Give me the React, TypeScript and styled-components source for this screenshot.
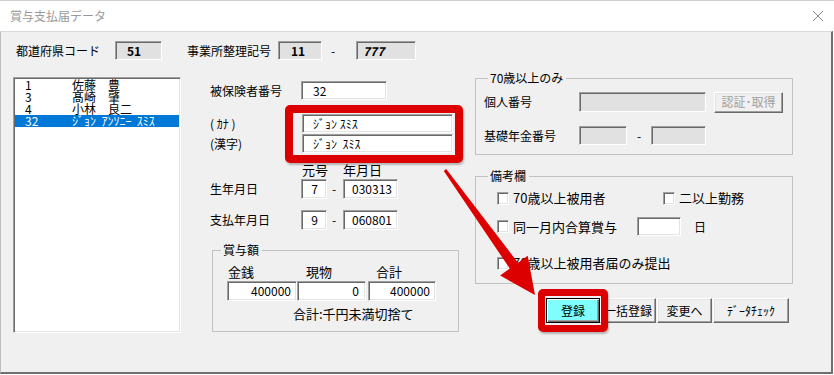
import React from 'react';
import styled, { createGlobalStyle } from 'styled-components';

const GlobalStyle = createGlobalStyle`
  html, body {
    margin: 0;
    padding: 0;
    background: #fff;
  }
  body {
    font-family: "Noto Sans CJK JP", "Noto Sans", sans-serif;
    font-size: 12px;
    color: #000;
  }
`;

const RED = '#dc0000';

const Window = styled.div`
  position: relative;
  width: 834px;
  height: 375px;
  background: #fff;
  overflow: hidden;
`;

const TitleBar = styled.div`
  height: 31px;
  box-sizing: border-box;
  border-top: 1px solid #cfcfcf;
  display: flex;
  align-items: center;
  justify-content: space-between;
  padding: 0 10px;
`;

const Title = styled.span`
  color: #9a9a9a;
  font-size: 12px;
  line-height: 1;
`;

const Body = styled.div`
  width: 833px;
  height: 343px;
  box-sizing: border-box;
  background: #f0f0f0;
  border-top: 1px solid #dadada;
  border-left: 1px solid #bdbdbd;
  border-right: 2px solid #6f6f6f;
  border-bottom: 2px solid #6f6f6f;
  padding-top: 9px;
`;

const HeaderRow = styled.div`
  display: flex;
  align-items: center;
  height: 19px;
  padding-left: 15px;
`;

const Label = styled.span<{ $w?: number; $ml?: number }>`
  display: inline-block;
  flex: none;
  width: ${p => (p.$w ? `${p.$w}px` : 'auto')};
  margin-left: ${p => p.$ml ?? 0}px;
  line-height: 14px;
  white-space: pre;
`;

const TextBox = styled.div<{
  $w: number;
  $h?: number;
  $align?: 'left' | 'right';
  $pad?: number;
  $tone?: 'white' | 'gray';
  $bold?: boolean;
}>`
  box-sizing: border-box;
  flex: none;
  width: ${p => p.$w}px;
  height: ${p => p.$h ?? 19}px;
  background: ${p => (p.$tone === 'gray' ? '#e1e1e1' : '#fff')};
  border: 1px solid;
  border-color: #a0a0a0 #fff #fff #a0a0a0;
  box-shadow: inset 1px 1px #696969, inset -1px -1px #e3e3e3;
  display: flex;
  align-items: center;
  justify-content: ${p => (p.$align === 'right' ? 'flex-end' : 'flex-start')};
  padding: 0 ${p => p.$pad ?? 9}px;
  font-weight: ${p => (p.$bold ? 700 : 400)};
  line-height: 1;
  white-space: pre;
  overflow: hidden;
`;

const Dash = styled.span<{ $w: number; $pl: number }>`
  flex: none;
  width: ${p => p.$w}px;
  padding-left: ${p => p.$pl}px;
  box-sizing: border-box;
  line-height: 1;
`;

const Main = styled.div`
  display: flex;
  align-items: flex-start;
  margin-top: 11px;
  padding-left: 12px;
`;

const ListBox = styled.div`
  box-sizing: border-box;
  width: 168px;
  height: 256px;
  margin-top: 6px;
  background: #fff;
  border: 1px solid;
  border-color: #a0a0a0 #fff #fff #a0a0a0;
  box-shadow: inset 1px 1px #696969, inset -1px -1px #e3e3e3;
  padding: 1px 1px 0 1px;
  overflow: hidden;
`;

const ListRow = styled.div<{ $selected?: boolean }>`
  display: grid;
  grid-template-columns: 47px 1fr;
  height: 12px;
  line-height: 12px;
  font-size: 12px;
  padding-left: 10px;
  background: ${p => (p.$selected ? '#0078d7' : 'transparent')};
  color: ${p => (p.$selected ? '#fff' : '#000')};
  white-space: pre;
  overflow: hidden;
`;

const Middle = styled.div`
  display: flex;
  flex-direction: column;
  width: 249px;
  margin-left: 29px;
`;

const FormRow = styled.div<{ $top: number; $h?: number }>`
  display: flex;
  align-items: center;
  margin-top: ${p => p.$top}px;
  height: ${p => p.$h ?? 19}px;
`;

const DateHead = styled.div`
  display: flex;
  align-items: center;
  height: 14px;
  margin-top: 10px;
  padding-left: 92px;
  font-size: 13px;
`;

const Group = styled.fieldset<{ $w: number; $h: number; $top: number; $ml?: number }>`
  box-sizing: border-box;
  width: ${p => p.$w}px;
  height: ${p => p.$h}px;
  margin: ${p => p.$top}px 0 0 ${p => p.$ml ?? 0}px;
  padding: 0;
  border: 1px solid #c2c2c2;
  min-width: 0;
`;

const Legend = styled.legend<{ $ml: number }>`
  margin-left: ${p => p.$ml}px;
  padding: 0 3px 0 2px;
  line-height: 14px;
  height: 14px;
`;

const GroupBody = styled.div<{ $pl: number }>`
  display: flex;
  flex-direction: column;
  padding-left: ${p => p.$pl}px;
`;

const AmountLabels = styled.div`
  display: flex;
  height: 14px;
  line-height: 14px;
  margin-top: 8px;
  font-size: 13px;
`;

const AmountRow = styled.div`
  display: flex;
  margin-top: 2px;
`;

const Note = styled.div`
  margin-top: 6px;
  padding-left: 66px;
  height: 14px;
  line-height: 14px;
  font-size: 13px;
`;

const Right = styled.div`
  display: flex;
  flex-direction: column;
  width: 318px;
  margin-left: 16px;
`;

const Button = styled.div<{ $w: number; $h?: number; $ml?: number; $primary?: boolean; $disabled?: boolean }>`
  box-sizing: border-box;
  flex: none;
  width: ${p => p.$w}px;
  height: ${p => p.$h ?? 25}px;
  margin-left: ${p => p.$ml ?? 0}px;
  display: flex;
  align-items: center;
  justify-content: center;
  background: ${p => (p.$primary ? '#80ffff' : '#f0f0f0')};
  color: ${p => (p.$disabled ? '#a0a0a0' : '#000')};
  border: 1px solid;
  border-color: ${p => (p.$primary ? '#000' : '#fff #696969 #696969 #fff')};
  box-shadow: ${p =>
    p.$primary
      ? 'inset 1px 1px #fff, inset -1px -1px #696969, inset -2px -2px #a0a0a0'
      : 'inset -1px -1px #a0a0a0, inset 1px 1px #e3e3e3'};
  line-height: 1;
  white-space: pre;
`;

const CheckRow = styled.div<{ $top: number; $h?: number }>`
  display: flex;
  align-items: center;
  margin-top: ${p => p.$top}px;
  height: ${p => p.$h ?? 14}px;
`;

const CheckItem = styled.label<{ $w?: number }>`
  display: flex;
  align-items: center;
  gap: 4px;
  flex: none;
  width: ${p => (p.$w ? `${p.$w}px` : 'auto')};
  font-size: 13px;
  line-height: 14px;
`;

const CheckBox = styled.span`
  box-sizing: border-box;
  width: 12px;
  height: 13px;
  flex: none;
  background: #fff;
  border: 1px solid;
  border-color: #a0a0a0 #fff #fff #a0a0a0;
  box-shadow: inset 1px 1px #696969, inset -1px -1px #e3e3e3;
`;

const ButtonRow = styled.div`
  display: flex;
  justify-content: flex-end;
  margin-top: 14px;
  padding-right: 4px;
`;

const Highlight = styled.div<{ $x: number; $y: number; $w: number; $h: number; $b: number }>`
  position: absolute;
  left: ${p => p.$x}px;
  top: ${p => p.$y}px;
  width: ${p => p.$w}px;
  height: ${p => p.$h}px;
  box-sizing: border-box;
  border: ${p => p.$b}px solid ${RED};
  border-radius: 5px;
  box-shadow: 1px 2px 2px rgba(0, 0, 0, 0.25);
  pointer-events: none;
`;

const ArrowLayer = styled.svg`
  position: absolute;
  left: 0;
  top: 0;
  pointer-events: none;
`;

const people = [
  { no: '1', name: '佐藤　豊' },
  { no: '3', name: '髙崎　肇' },
  { no: '4', name: '小林　良二' },
  { no: '32', name: 'ｼﾞｮﾝ  ｱﾝｿﾆｰ  ｽﾐｽ', selected: true },
];

export default function App() {
  return (
    <Window>
      <GlobalStyle />
      <TitleBar>
        <Title>賞与支払届データ</Title>
        <svg width="12" height="12" viewBox="0 0 12 12">
          <path d="M1 1 L11 11 M11 1 L1 11" stroke="#8a8a8a" strokeWidth="1" fill="none" />
        </svg>
      </TitleBar>
      <Body>
        <HeaderRow>
          <Label $w={99}>都道府県コード</Label>
          <TextBox $w={47} $tone="gray" $pad={11} $bold>51</TextBox>
          <Label $w={91} $ml={25}>事業所整理記号</Label>
          <TextBox $w={44} $tone="gray" $pad={12} $bold>11</TextBox>
          <Dash $w={34} $pl={9}>-</Dash>
          <TextBox $w={60} $tone="gray" $pad={6} $bold>
            <i>777</i>
          </TextBox>
        </HeaderRow>

        <Main>
          <ListBox>
            {people.map(p => (
              <ListRow key={p.no} $selected={p.selected}>
                <span>{p.no}</span>
                <span>{p.name}</span>
              </ListRow>
            ))}
          </ListBox>

          <Middle>
            <FormRow $top={10}>
              <Label $w={91}>被保険者番号</Label>
              <TextBox $w={86} $pad={11}>32</TextBox>
            </FormRow>
            <FormRow $top={14}>
              <Label $w={92}>( ｶﾅ )</Label>
              <TextBox $w={151} $pad={10}>ｼﾞｮﾝ ｽﾐｽ</TextBox>
            </FormRow>
            <FormRow $top={1}>
              <Label $w={92}>(漢字)</Label>
              <TextBox $w={151} $pad={10}>ｼﾞｮﾝ  ｽﾐｽ</TextBox>
            </FormRow>
            <DateHead>
              <Label $w={41}>元号</Label>
              <Label>年月日</Label>
            </DateHead>
            <FormRow $top={2} $h={20}>
              <Label $w={91}>生年月日</Label>
              <TextBox $w={26} $h={20} $align="right" $pad={8}>7</TextBox>
              <Dash $w={16} $pl={5}>-</Dash>
              <TextBox $w={55} $h={20} $align="right" $pad={5}>030313</TextBox>
            </FormRow>
            <FormRow $top={11} $h={20}>
              <Label $w={91}>支払年月日</Label>
              <TextBox $w={26} $h={20} $align="right" $pad={8}>9</TextBox>
              <Dash $w={16} $pl={5}>-</Dash>
              <TextBox $w={55} $h={20} $align="right" $pad={5}>060801</TextBox>
            </FormRow>

            <Group $w={247} $h={89} $top={13} $ml={2}>
              <Legend $ml={8}>賞与額</Legend>
              <GroupBody $pl={14}>
                <AmountLabels>
                  <Label $w={78} $ml={1}>金銭</Label>
                  <Label $w={70}>現物</Label>
                  <Label>合計</Label>
                </AmountLabels>
                <AmountRow>
                  <TextBox $w={70} $h={20} $align="right" $pad={5}>400000</TextBox>
                  <TextBox $w={69} $h={20} $align="right" $pad={6}>0</TextBox>
                  <TextBox $w={68} $h={20} $align="right" $pad={5} style={{ marginLeft: 2 }}>400000</TextBox>
                </AmountRow>
                <Note>合計:千円未満切捨て</Note>
              </GroupBody>
            </Group>
          </Middle>

          <Right>
            <Group $w={318} $h={84} $top={0}>
              <Legend $ml={12}>70歳以上のみ</Legend>
              <GroupBody $pl={8}>
                <FormRow $top={6} $h={22}>
                  <Label $w={95}>個人番号</Label>
                  <TextBox $w={127} $h={20} $tone="gray" />
                  <Button $w={69} $h={21} $ml={8} $disabled>認証･取得</Button>
                </FormRow>
                <FormRow $top={13}>
                  <Label $w={95}>基礎年金番号</Label>
                  <TextBox $w={48} $tone="gray" />
                  <Dash $w={24} $pl={10}>-</Dash>
                  <TextBox $w={55} $tone="gray" />
                </FormRow>
              </GroupBody>
            </Group>

            <Group $w={318} $h={115} $top={14}>
              <Legend $ml={12}>備考欄</Legend>
              <GroupBody $pl={21}>
                <CheckRow $top={8}>
                  <CheckItem $w={166}>
                    <CheckBox />
                    70歳以上被用者
                  </CheckItem>
                  <CheckItem>
                    <CheckBox />
                    二以上勤務
                  </CheckItem>
                </CheckRow>
                <CheckRow $top={12} $h={19}>
                  <CheckItem $w={140}>
                    <CheckBox />
                    同一月内合算賞与
                  </CheckItem>
                  <TextBox $w={44} $h={19} />
                  <Label $ml={13}>日</Label>
                </CheckRow>
                <CheckRow $top={20}>
                  <CheckItem>
                    <CheckBox />
                    70歳以上被用者届のみ提出
                  </CheckItem>
                </CheckRow>
              </GroupBody>
            </Group>

            <ButtonRow>
              <Button $w={54} $primary>登録</Button>
              <Button $w={56}>一括登録</Button>
              <Button $w={55} $ml={1}>変更へ</Button>
              <Button $w={76} $ml={1}>ﾃﾞｰﾀﾁｪｯｸ</Button>
            </ButtonRow>
          </Right>
        </Main>
      </Body>

      <Highlight $x={285} $y={105} $w={178} $h={58} $b={8} />
      <Highlight $x={538} $y={289} $w={70} $h={43} $b={7} />
      <ArrowLayer width="834" height="375" viewBox="0 0 834 375">
        <polygon
          points="446.2,169.1 518,262.8 527.7,255.8 535,295 500.1,275.6 509.8,268.6 443.8,170.9"
          fill={RED}
        />
      </ArrowLayer>
    </Window>
  );
}
